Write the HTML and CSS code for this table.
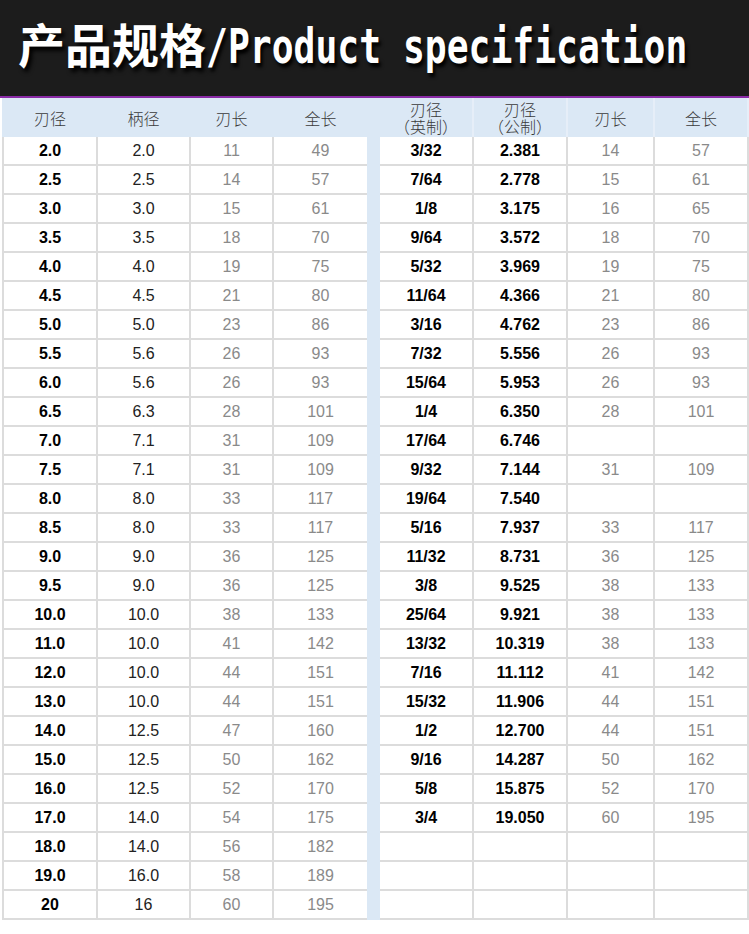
FILE: index.html
```html
<!DOCTYPE html>
<html lang="zh-CN">
<head>
<meta charset="utf-8">
<title>产品规格/Product specification</title>
<link rel="stylesheet" href="styles.css">
</head>
<body>
<header class="banner">
  <h1 class="title"><span class="title-cn">产品规格</span><span class="title-en">/Product specification</span></h1>
</header>
<main class="sheet">
  <section class="block block-left">
    <div class="head head-left">
      <span>刃径</span><span>柄径</span><span>刃长</span><span>全长</span>
    </div>
    <div class="data data-left">
      <span>2.0</span><span>2.0</span><span>11</span><span>49</span>
      <span>2.5</span><span>2.5</span><span>14</span><span>57</span>
      <span>3.0</span><span>3.0</span><span>15</span><span>61</span>
      <span>3.5</span><span>3.5</span><span>18</span><span>70</span>
      <span>4.0</span><span>4.0</span><span>19</span><span>75</span>
      <span>4.5</span><span>4.5</span><span>21</span><span>80</span>
      <span>5.0</span><span>5.0</span><span>23</span><span>86</span>
      <span>5.5</span><span>5.6</span><span>26</span><span>93</span>
      <span>6.0</span><span>5.6</span><span>26</span><span>93</span>
      <span>6.5</span><span>6.3</span><span>28</span><span>101</span>
      <span>7.0</span><span>7.1</span><span>31</span><span>109</span>
      <span>7.5</span><span>7.1</span><span>31</span><span>109</span>
      <span>8.0</span><span>8.0</span><span>33</span><span>117</span>
      <span>8.5</span><span>8.0</span><span>33</span><span>117</span>
      <span>9.0</span><span>9.0</span><span>36</span><span>125</span>
      <span>9.5</span><span>9.0</span><span>36</span><span>125</span>
      <span>10.0</span><span>10.0</span><span>38</span><span>133</span>
      <span>11.0</span><span>10.0</span><span>41</span><span>142</span>
      <span>12.0</span><span>10.0</span><span>44</span><span>151</span>
      <span>13.0</span><span>10.0</span><span>44</span><span>151</span>
      <span>14.0</span><span>12.5</span><span>47</span><span>160</span>
      <span>15.0</span><span>12.5</span><span>50</span><span>162</span>
      <span>16.0</span><span>12.5</span><span>52</span><span>170</span>
      <span>17.0</span><span>14.0</span><span>54</span><span>175</span>
      <span>18.0</span><span>14.0</span><span>56</span><span>182</span>
      <span>19.0</span><span>16.0</span><span>58</span><span>189</span>
      <span>20</span><span>16</span><span>60</span><span>195</span>
    </div>
  </section>
  <div class="divider"></div>
  <section class="block block-right">
    <div class="head head-right">
      <span class="two"><span class="ln">刃径</span><span class="ln">（英制）</span></span><span class="two"><span class="ln">刃径</span><span class="ln">（公制）</span></span><span>刃长</span><span>全长</span>
    </div>
    <div class="data data-right">
      <span>3/32</span><span>2.381</span><span>14</span><span>57</span>
      <span>7/64</span><span>2.778</span><span>15</span><span>61</span>
      <span>1/8</span><span>3.175</span><span>16</span><span>65</span>
      <span>9/64</span><span>3.572</span><span>18</span><span>70</span>
      <span>5/32</span><span>3.969</span><span>19</span><span>75</span>
      <span>11/64</span><span>4.366</span><span>21</span><span>80</span>
      <span>3/16</span><span>4.762</span><span>23</span><span>86</span>
      <span>7/32</span><span>5.556</span><span>26</span><span>93</span>
      <span>15/64</span><span>5.953</span><span>26</span><span>93</span>
      <span>1/4</span><span>6.350</span><span>28</span><span>101</span>
      <span>17/64</span><span>6.746</span><span></span><span></span>
      <span>9/32</span><span>7.144</span><span>31</span><span>109</span>
      <span>19/64</span><span>7.540</span><span></span><span></span>
      <span>5/16</span><span>7.937</span><span>33</span><span>117</span>
      <span>11/32</span><span>8.731</span><span>36</span><span>125</span>
      <span>3/8</span><span>9.525</span><span>38</span><span>133</span>
      <span>25/64</span><span>9.921</span><span>38</span><span>133</span>
      <span>13/32</span><span>10.319</span><span>38</span><span>133</span>
      <span>7/16</span><span>11.112</span><span>41</span><span>142</span>
      <span>15/32</span><span>11.906</span><span>44</span><span>151</span>
      <span>1/2</span><span>12.700</span><span>44</span><span>151</span>
      <span>9/16</span><span>14.287</span><span>50</span><span>162</span>
      <span>5/8</span><span>15.875</span><span>52</span><span>170</span>
      <span>3/4</span><span>19.050</span><span>60</span><span>195</span>
      <span></span><span></span><span></span><span></span>
      <span></span><span></span><span></span><span></span>
      <span></span><span></span><span></span><span></span>
    </div>
  </section>
</main>
</body>
</html>
```

FILE: styles.css
```css
html, body {
  margin: 0;
  padding: 0;
  background: #ffffff;
}

body {
  width: 749px;
  font-family: "Liberation Sans", Arial, "Noto Sans CJK SC", sans-serif;
}

.banner {
  height: 96px;
  background: #1c1c1c;
  border-bottom: 2px solid #8a2ba6;
  overflow: hidden;
}

.title {
  margin: 0;
  padding: 19px 0 0 18px;
  line-height: 48px;
  white-space: nowrap;
  color: #ffffff;
  font-weight: bold;
  text-shadow: 3px 4px 4px #000000;
}

.title-cn {
  font-family: "Noto Sans CJK SC", sans-serif;
  font-size: 47px;
  font-weight: bold;
}

.title-en {
  display: inline-block;
  font-family: "DejaVu Sans Mono", monospace;
  font-size: 48px;
  font-weight: bold;
  transform: scaleX(0.757);
  transform-origin: left center;
}

.sheet {
  display: flex;
  padding-left: 2px;
}

.block {
  display: flex;
  flex-direction: column;
}

.divider {
  width: 13px;
  background: #dbe8f5;
}

.head {
  display: grid;
  height: 39px;
  background: #e6eef8;
  column-gap: 2px;
}

.head > span {
  display: flex;
  align-items: center;
  justify-content: center;
  text-align: center;
  background: #dbe8f5;
  font-family: "Noto Sans CJK SC", sans-serif;
  font-weight: 300;
  font-size: 16px;
  color: #3a3a3a;
}

.head > .two {
  flex-direction: column;
  gap: 0;
}

.head .ln {
  display: block;
  height: 17px;
  line-height: 17px;
}

.data {
  display: grid;
  grid-auto-rows: 27px;
  gap: 2px;
  background: #dcdcdc;
  padding-bottom: 2px;
}

.head-left,
.data-left {
  grid-template-columns: 92px 91px 81px 93px;
  padding-left: 2px;
}

.head-left {
  background: #dbe8f5;
}

.head-right,
.data-right {
  grid-template-columns: 92px 92px 85px 92px;
  padding-right: 2px;
}

.data span {
  display: flex;
  align-items: center;
  justify-content: center;
  background: #ffffff;
  font-size: 16px;
  color: #8a8a8a;
}

.data-left span:nth-child(4n+1) {
  font-weight: bold;
  color: #000000;
}

.data-left span:nth-child(4n+2) {
  color: #222222;
}

.data-right span:nth-child(4n+1),
.data-right span:nth-child(4n+2) {
  font-weight: bold;
  color: #000000;
}
```
